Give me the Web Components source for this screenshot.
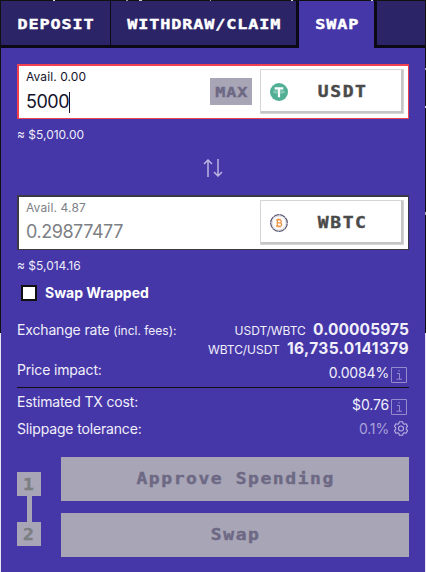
<!DOCTYPE html>
<html lang="en"><head><meta charset="utf-8"><title>Swap</title>
<style>
html,body{margin:0;height:100%;overflow:hidden}
body{font-family:Inter,"Liberation Sans",sans-serif;color:#fff;background:#e9e9f2}
</style></head><body>
<swap-page></swap-page>
<script>
function define(name, html, setup){
  const t=document.createElement('template'); t.innerHTML=html;
  customElements.define(name, class extends HTMLElement{
    connectedCallback(){
      if(this.shadowRoot) return;
      this.attachShadow({mode:'open'}).append(t.content.cloneNode(true));
      if(setup) setup(this,this.shadowRoot);
    }
  });
}
/* wide block lettering used on tabs and buttons */
define('pixel-text',`<style>
:host{display:inline-block;font:bold 14px/16px "DejaVu Sans Mono",monospace;letter-spacing:.74px;margin-right:-.74px;transform:scaleX(1.2);white-space:pre;-webkit-text-stroke:.4px currentColor}
:host([large]){font-size:15px;letter-spacing:1.3px;margin-right:-1.3px}
</style><slot></slot>`);
define('tab-item',`<style>
:host{display:flex;box-sizing:border-box;align-items:center;justify-content:center;height:47px;background:#2b2466;border-bottom:3px solid #0b0915;padding-top:1px}
:host([active]){background:#4537a7;border-bottom-color:#4537a7}
</style><pixel-text><slot></slot></pixel-text>`);
define('tab-bar',`<style>
:host{display:grid;grid-template-columns:109px 1px 185px 3px 75px 3px 48px;background:#0b0915}
</style><tab-item>DEPOSIT</tab-item><i></i><tab-item>WITHDRAW/CLAIM</tab-item><i></i><tab-item active>SWAP</tab-item><i></i><tab-item></tab-item>`);
define('max-button',`<style>
:host{display:flex;align-items:center;justify-content:center;width:42px;height:27px;background:#a8a5b7;color:#6d6984;margin:12px 8px 0 0}
</style><pixel-text>MAX</pixel-text>`);
define('token-icon',`<style>:host{display:block;width:18px;height:18px}svg{display:block}</style><svg width="18" height="18" viewBox="0 0 18 18"></svg>`,(h,r)=>{
  r.querySelector('svg').innerHTML = h.getAttribute('coin')==='usdt'
  ? '<circle cx="9" cy="9" r="9" fill="#50af95"/><path d="M4.7 4.2h8.6v2.2h-3.2v7.8H7.900V6.4H4.7z" fill="#fff"/><ellipse cx="9" cy="8.9" rx="5.6" ry="1.1" fill="none" stroke="#d5ede6" stroke-width=".6"/>'
  : '<circle cx="9" cy="9" r="8.3" fill="#fff" stroke="#514c68" stroke-width="1.2"/><circle cx="9" cy="9" r="8.3" fill="none" stroke="#fff" stroke-width="1.4" stroke-dasharray=".5 6.02"/><circle cx="9" cy="9" r="6.9" fill="none" stroke="#aaa7b3" stroke-width=".4"/><path d="M6 5.9h3.700a1.500 1.500 0 0 1 0 3H7.400h2.700a1.600 1.600 0 0 1 0 3.200H6M7.300 5.900v6.200M8.200 4.600v1.300M10 4.600v1.300M8.200 12.100v1.300M10 12.100v1.300" fill="none" stroke="#f09242" stroke-width="1.25"/>';
});
define('token-select',`<style>
:host{box-sizing:border-box;display:grid;grid-template-columns:18px 1fr;align-items:center;width:144px;height:45px;background:#fff;border:1px solid #d5d5d5;box-shadow:inset -2px -2px #c5c5c5;padding:0 6px 0 9px;color:#4a4a4a}
.n{text-align:center;padding-bottom:2px}
</style><div class="n"><pixel-text large><slot></slot></pixel-text></div>`,(h,r)=>{
  const icon=document.createElement('token-icon');
  icon.setAttribute('coin',h.getAttribute('coin'));
  r.querySelector('.n').before(icon);
});
define('amount-box',`<style>
:host{box-sizing:border-box;display:flex;height:55px;background:#fff;border:solid #3c3947;border-width:2px 1px 1px 2px;color:#7d8085}
:host([error]){border-color:#f04150;color:#15122b}
.l{flex:1;padding-left:7px}
.a{font-size:12px;line-height:16px;margin-top:3px;letter-spacing:.15px}
.v{display:flex;align-items:center;font-size:18px;line-height:24px;margin-top:4px;letter-spacing:-.45px}
:host([error]) .v{margin-top:5px;letter-spacing:-.5px}
.c{width:1px;height:21px;background:#15122b;display:none}
:host([error]) .c{display:block}
:host([error]) .a{letter-spacing:.1px}
::slotted(token-select){margin:3px 4px 0 0}
</style><div class="l"><div class="a"><slot name="avail"></slot></div><div class="v"><slot name="value"></slot><span class="c"></span></div></div><slot name="max"></slot><slot name="token"></slot>`);
define('usd-value',`<style>:host{display:block;font-size:12px;line-height:16px;padding-top:8px;box-sizing:border-box;height:30px;color:#eeecfa}</style><slot></slot>`);
define('swap-arrows',`<style>:host{display:flex;justify-content:center;height:46px;box-sizing:border-box;padding-top:10px}</style>
<svg width="20" height="18" viewBox="0 0 20 18" fill="none" stroke="#bbb4e2" stroke-width="1.5"><path d="M5 18V1M1 5l4-4 4 4M15 0v17M11 13l4 4 4-4"/></svg>`);
define('check-row',`<style>:host{display:flex;align-items:center;height:20px;padding:3px 0 0 4px;gap:8px;font:bold 14px/18px Inter,sans-serif}
i{box-sizing:border-box;width:16px;height:16px;background:#fff;border:2px solid #111}</style><i></i><span><slot></slot></span>`);
define('info-icon',`<style>:host{display:block;width:16px;height:16px}svg{display:block}</style><svg width="16" height="16" viewBox="0 0 16 16" fill="none" stroke="#958ccf"><path d="M.5.5h15v15H.5zM6 6.500h2.500V12M5.500 12.200h5.500M7.300 3.800h1.600"/></svg>`);
define('gear-icon',`<style>:host{display:block;width:14px;height:15px}svg{display:block}</style><svg width="14" height="15" viewBox="0 0 14 15" fill="none" stroke="#b9b2e2" stroke-width="1.1" stroke-linejoin="round"><path d="M5.4.7h3.2l.5 1.8 1.2.7 1.8-.5 1.5 2.7-1.3 1.3v1.5l1.3 1.4-1.5 2.7-1.8-.5-1.2.7-.5 1.8H5.4l-.5-1.8-1.2-.7-1.8.5L.4 9.6l1.3-1.4V6.700L.4 5.400l1.500-2.700 1.800.5 1.200-.7z"/><circle cx="7" cy="7.500" r="2.500"/></svg>`);
define('info-row',`<style>:host{display:flex;justify-content:space-between;font-size:14px;line-height:18px;color:#f1effb;letter-spacing:-.16px;white-space:nowrap}
div{display:flex}</style><div><slot name="label"></slot></div><div><slot></slot></div>`);
define('step-box',`<style>:host{display:flex;align-items:center;justify-content:center;width:24px;height:24px;background:#a8a5b7;color:#7c7f82}pixel-text{padding-top:1px}</style><pixel-text large><slot></slot></pixel-text>`);
define('action-button',`<style>:host{display:flex;align-items:center;justify-content:center;height:44px;background:#a8a5b7;color:#6d6984}</style><pixel-text large><slot></slot></pixel-text>`);
define('action-list',`<style>:host{display:grid;grid-template-columns:24px 1fr;column-gap:20px}
.s{display:flex;flex-direction:column;align-items:center;padding-top:15px}
.s i{width:5px;height:26px;background:#a8a5b7}
.b{display:grid;gap:12px}</style><div class="s"><step-box>1</step-box><i></i><step-box>2</step-box></div><div class="b"><action-button>Approve Spending</action-button><action-button>Swap</action-button></div>`);
define('swap-page',`<style>
:host{display:block;box-sizing:border-box;height:572px;padding:1px 1px 0;
background:
linear-gradient(90deg,#0000 53px,#ddd 53px 55px,#0000 55px 126px,#999 126px 128px,#0000 128px 139px,#ccc 139px 142px,#0000 142px 210px,#aaa 210px 211px,#0000 211px 291px,#ddd 291px 293px,#0000 293px 371px,#ddd 371px 373px,#0000 373px) 0 0/100% 1px no-repeat,
linear-gradient(#0000 68px,#aaa 68px 70px,#0000 70px 106px,#ccc 106px 108px,#0000 108px 212px,#aaa 212px 215px,#0000 215px) 425px 0/1px 333px no-repeat,
linear-gradient(#111 333px,#e6e4f0 333px)}
main{box-sizing:border-box;height:571px;background:#4537a7}
section{padding:16px 16px 0}
.rate{margin-top:18px;height:40px}
.rates{display:grid;justify-items:end;align-content:start;line-height:18px;font-size:12px;letter-spacing:-.05px}
.rates b{font-size:15.5px;margin-left:4px;letter-spacing:.1px}
.rates span+span b{letter-spacing:.38px}
small{font-size:12px;letter-spacing:0}
.impact{height:27px;border-bottom:1px solid #111;box-sizing:border-box}
info-icon{margin:6px 2px 0 2px}
.n{padding-top:3px}
.cost{margin-top:5px;height:27px}
.slip{height:37px}
.slip .n{padding-top:0;color:#aaa2db}
gear-icon{margin:1px 1px 0 5px}
</style><main><tab-bar></tab-bar><section>
<amount-box error><span slot="avail">Avail. 0.00</span><span slot="value">5000</span><max-button slot="max"></max-button><token-select slot="token" coin="usdt">USDT</token-select></amount-box>
<usd-value>≈ $5,010.00</usd-value>
<swap-arrows></swap-arrows>
<amount-box><span slot="avail">Avail. 4.87</span><span slot="value">0.29877477</span><token-select slot="token" coin="wbtc">WBTC</token-select></amount-box>
<usd-value>≈ $5,014.16</usd-value>
<check-row>Swap Wrapped</check-row>
<info-row class="rate"><span slot="label">Exchange rate <small>(incl. fees):</small></span><div class="rates"><span>USDT/WBTC <b>0.00005975</b></span><span>WBTC/USDT <b>16,735.0141379</b></span></div></info-row>
<info-row class="impact"><span slot="label">Price impact:</span><span class="n">0.0084%</span><info-icon></info-icon></info-row>
<info-row class="cost"><span slot="label">Estimated TX cost:</span><span class="n">$0.76</span><info-icon></info-icon></info-row>
<info-row class="slip"><span slot="label">Slippage tolerance:</span><span class="n">0.1%</span><gear-icon></gear-icon></info-row>
<action-list></action-list>
</section></main>`);
</script></body></html>
